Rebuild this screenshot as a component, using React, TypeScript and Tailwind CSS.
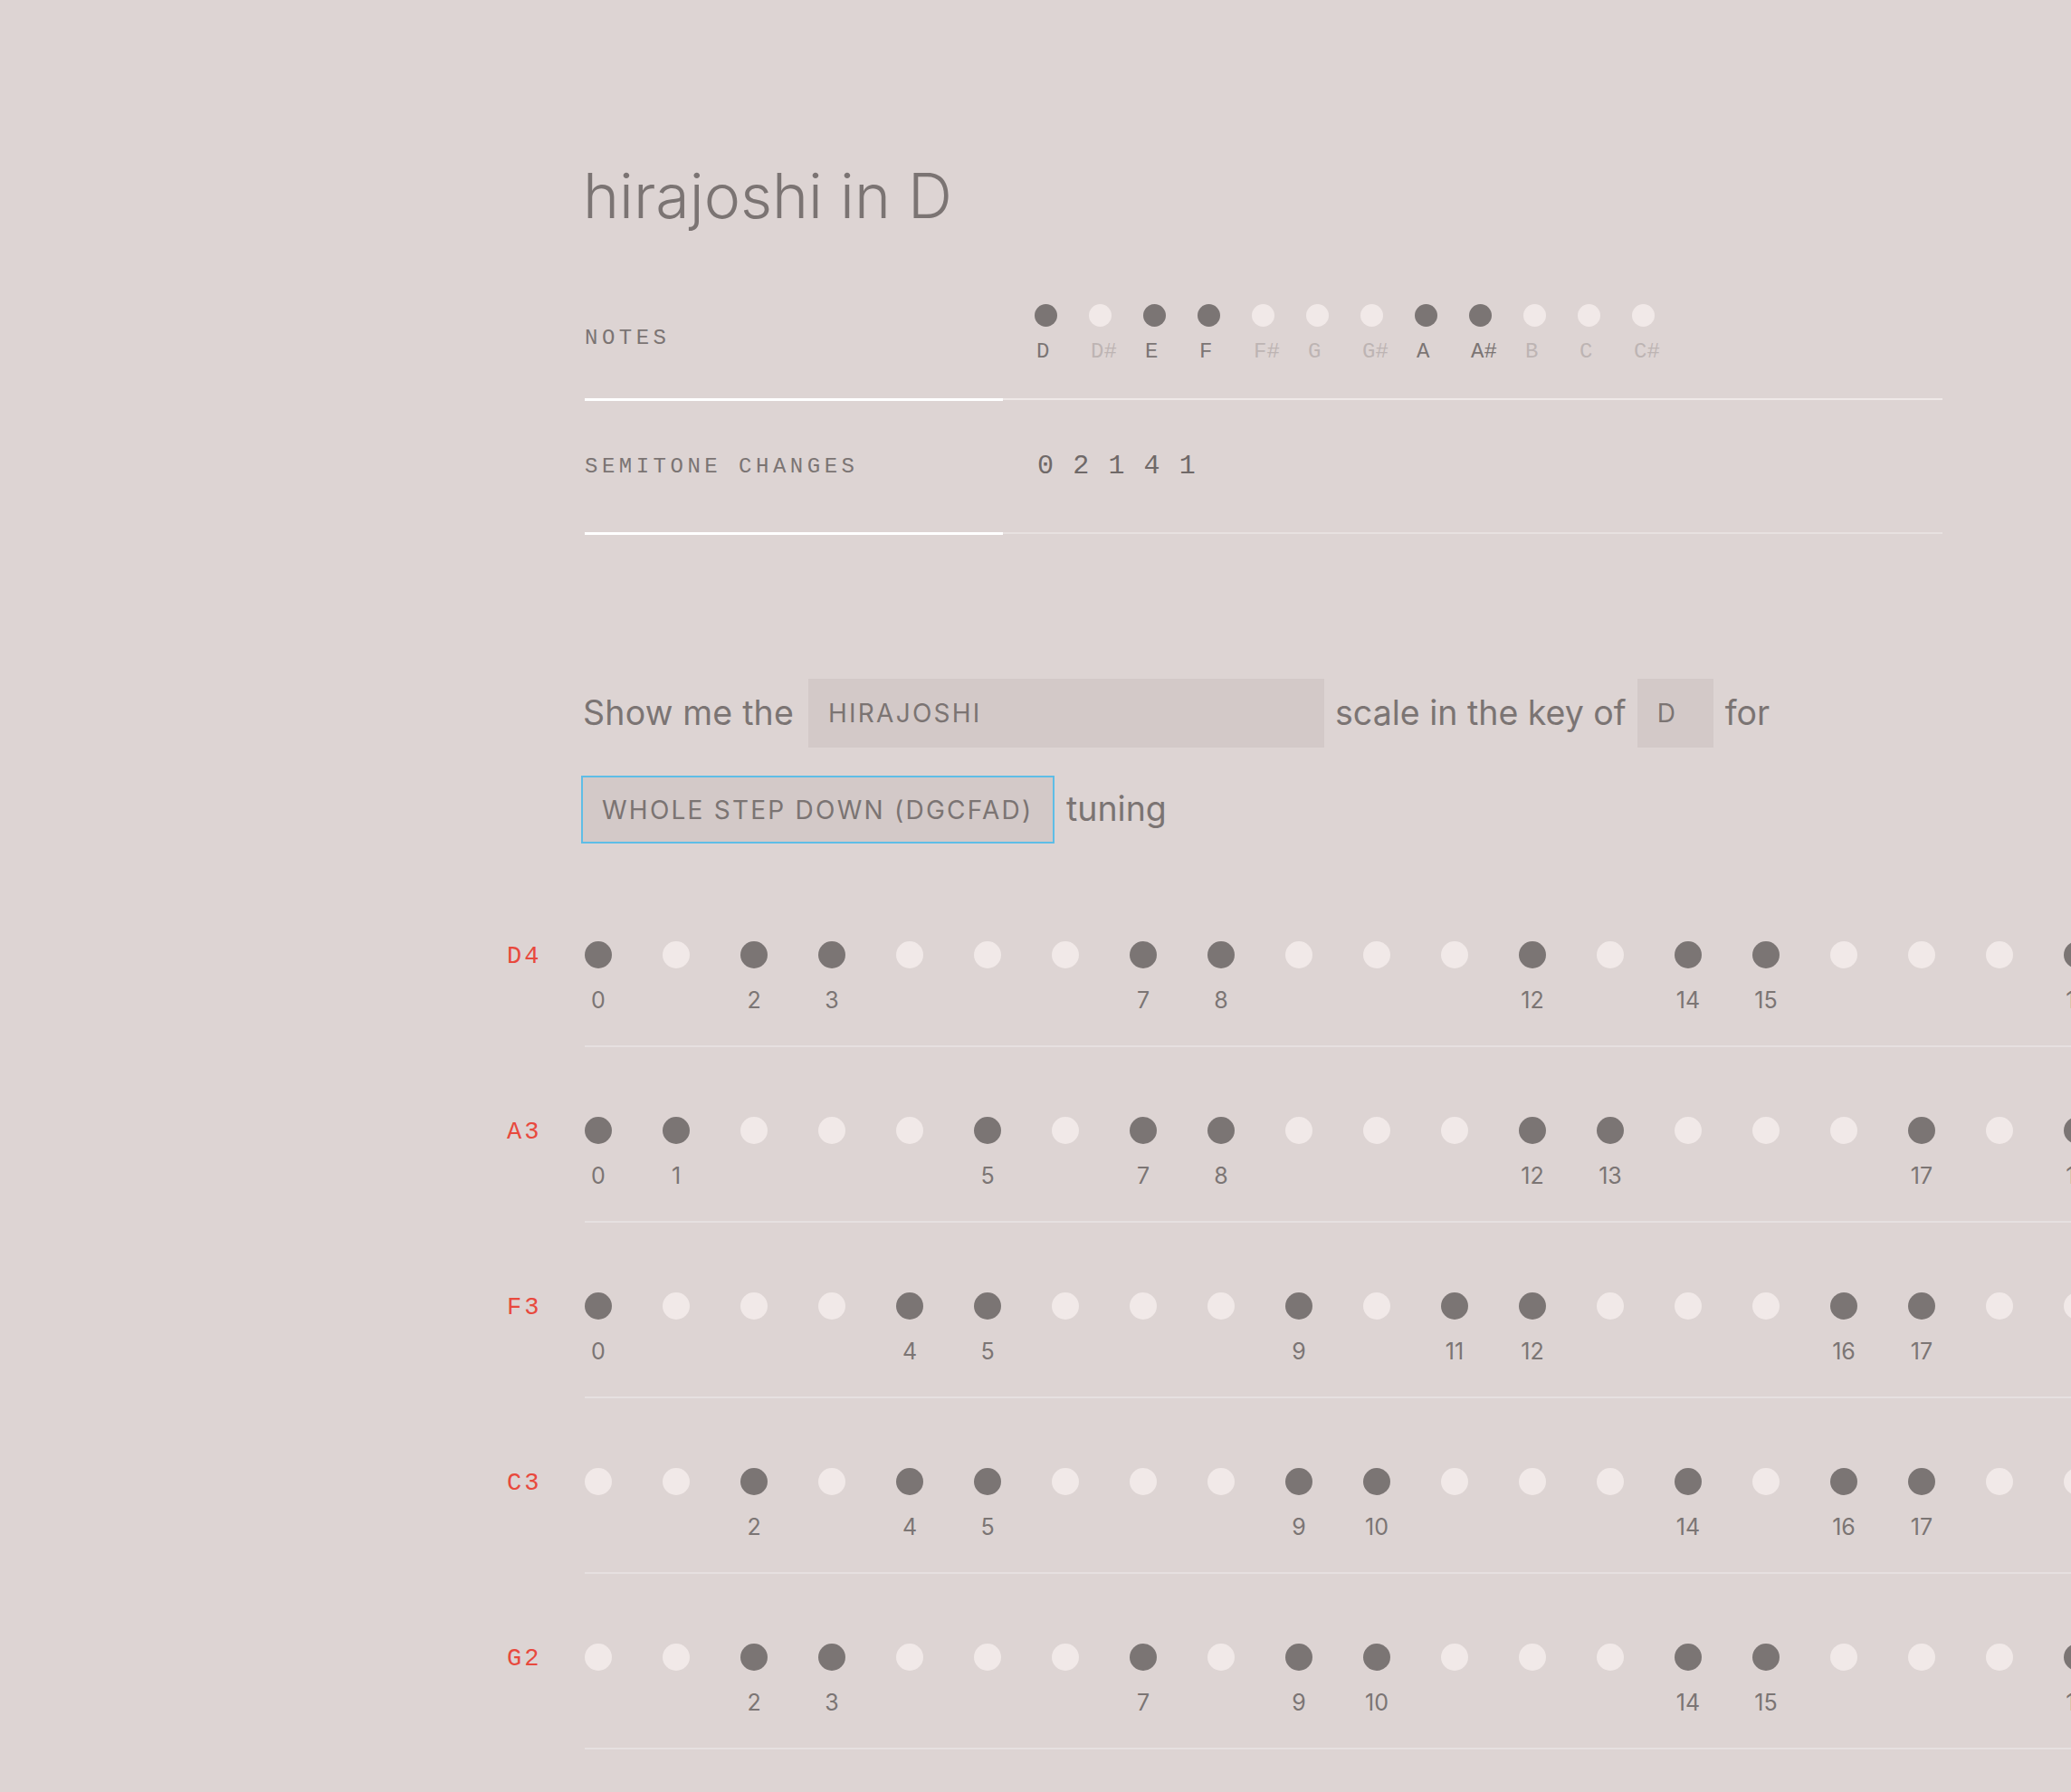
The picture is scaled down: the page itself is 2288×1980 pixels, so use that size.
import React from "react";

const NOTES = ["D", "D#", "E", "F", "F#", "G", "G#", "A", "A#", "B", "C", "C#"];
const ACTIVE = [2, 4, 5, 9, 10]; // pitch classes in the scale (C = 0)
const STRINGS = [
    { name: "D4", root: 2 },
    { name: "A3", root: 9 },
    { name: "F3", root: 5 },
    { name: "C3", root: 0 },
    { name: "G2", root: 7 },
];
const FRETS = Array.from({ length: 25 }, (_, i) => i);

const mono = "font-['Liberation_Mono',monospace]";
const sans = "font-['Inter','Noto_Sans',sans-serif]";

function NoteDot({ on, size }: { on: boolean; size: string }) {
    return <div className={`${size} rounded-full ${on ? "bg-[#7b7574]" : "bg-[#f1e9e8]"}`} />;
}

function StringRow({ name, root }: { name: string; root: number }) {
    return (
        <div className="flex items-start">
            <div className={`w-[86px] pt-[77px] ${mono}`}>
                <div className="h-[34px] flex items-center text-[27px] tracking-[3px] text-[#e8493d]">{name}</div>
            </div>
            <div className="flex gap-[56px] pt-[77px] pb-[35px] pr-[40px] border-b-2 border-[#e6e0e0]">
                {FRETS.map((f) => {
                    const on = ACTIVE.includes((root + f) % 12);
                    return (
                        <div key={f} className="w-[30px] flex flex-col items-center">
                            <NoteDot on={on} size="size-[30px]" />
                            <div className={`mt-[20px] h-[30px] leading-[30px] text-[25px] whitespace-nowrap text-[#7b7574] ${sans}`}>
                                {on ? f : ""}
                            </div>
                        </div>
                    );
                })}
            </div>
        </div>
    );
}

export default function App() {
    return (
        <div className={`min-h-[1980px] w-full overflow-hidden bg-[#ddd4d3] text-[#7b7473] ${sans}`}>
            <div className="ml-[644px] w-[1502px] pt-[182px]">
                <h1 className="text-[68px] leading-none font-light">hirajoshi in D</h1>

                <div className="mt-[50px] ml-[2px]">
                    <div className="flex items-start">
                        <div className={`w-[462px] h-[143px] pt-[60px] border-b-[3px] border-white text-[24px] leading-[28px] tracking-[4.5px] ${mono}`}>
                            NOTES
                        </div>
                        <div className="flex-1 h-[142px] pl-[35px] pt-[36px] border-b-2 border-[#efe9e8] flex">
                            {NOTES.map((n, i) => {
                                const on = ACTIVE.includes((i + 2) % 12);
                                return (
                                    <div key={n} className="w-[60px] flex flex-col items-start">
                                        <NoteDot on={on} size="size-[25px]" />
                                        <div className={`mt-[16px] ml-[2px] text-[24px] leading-[24px] ${mono} ${on ? "text-[#7b7574]" : "text-[#bdb4b3]"}`}>
                                            {n}
                                        </div>
                                    </div>
                                );
                            })}
                        </div>
                    </div>
                    <div className="flex items-start">
                        <div className={`w-[462px] h-[148px] flex items-center border-b-[3px] border-white text-[24px] tracking-[4.5px] ${mono}`}>
                            SEMITONE CHANGES
                        </div>
                        <div className={`flex-1 h-[147px] pl-[38px] flex items-center border-b-2 border-[#e7e1e0] text-[30px] tracking-[1.6px] text-[#6f6968] ${mono}`}>
                            0 2 1 4 1
                        </div>
                    </div>
                </div>

                <div className="mt-[159px] text-[37.5px] flex flex-col gap-[31px]">
                    <div className="flex items-center gap-[12px]">
                        <span className="mr-[4px] tracking-[0.2px]">Show me the</span>
                        <div className="w-[570px] h-[76px] pl-[22px] flex items-center bg-[#d3c9c8] text-[28px] tracking-[0.08em] text-[#7b7473]">
                            HIRAJOSHI
                        </div>
                        <span>scale in the key of</span>
                        <div className="w-[84px] h-[76px] pl-[22px] flex items-center bg-[#d3c9c8] text-[28px] tracking-[0.08em] text-[#7b7473]">
                            D
                        </div>
                        <span className="ml-[1px]">for</span>
                    </div>
                    <div className="flex items-center gap-[13px] -ml-[2px]">
                        <div className="w-[523px] h-[75px] pl-[21px] flex items-center bg-[#d3c9c8] border-2 border-[#5ebde6] text-[28px] tracking-[0.08em] whitespace-nowrap">
                            WHOLE STEP DOWN (DGCFAD)
                        </div>
                        <span>tuning</span>
                    </div>
                </div>
            </div>

            <div className="ml-[560px] mt-[31px] w-max">
                {STRINGS.map((s) => (
                    <StringRow key={s.name} name={s.name} root={s.root} />
                ))}
            </div>
        </div>
    );
}
